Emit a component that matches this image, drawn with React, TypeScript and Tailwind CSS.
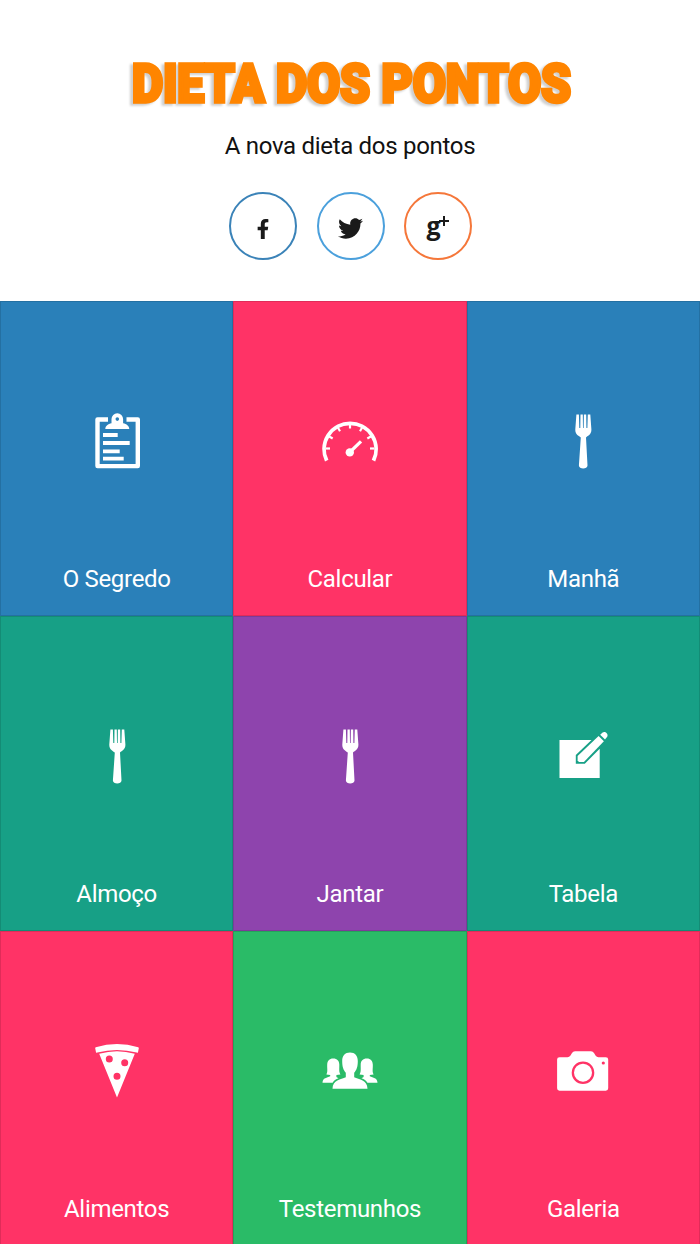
import clsx from "clsx"
import { FaFacebookF, FaTwitter } from "react-icons/fa"

const ClipboardIcon = () => (
  <svg viewBox="0 0 64 64" className="size-16" fill="none" stroke="currentColor">
    <path
      d="M23 10.5H12.5V57.1H52.8V10.5H41.5"
      strokeWidth="4.4"
      strokeLinejoin="round"
    />
    <path
      d="M18 26H32.7M18 34H44.7M18 42.3H34.7M18 49.7H38.7"
      strokeWidth="3.8"
    />
    <path
      d="M20.3 20C20.5 16.5 23 15 26.5 14.2V10A5.8 5.8 0 0 1 38.1 10V14.2C41.6 15 44.1 16.5 44.3 20ZM32.3 8.3A1.8 1.8 0 1 0 32.3 11.9A1.8 1.8 0 1 0 32.3 8.3Z"
      fill="currentColor"
      fillRule="evenodd"
      stroke="none"
    />
  </svg>
)

const GaugeIcon = () => (
  <svg viewBox="0 0 64 64" className="size-16" fill="none" stroke="currentColor">
    <path d="M8.7 51.7A26 26 0 1 1 55.5 51.7" strokeWidth="3.8" />
    {[-90, -60, -30, 0, 30, 60, 90].map((angle) => (
      <path
        key={angle}
        d="M32 15V19.5"
        strokeWidth="2.2"
        transform={`rotate(${angle} 32 39.5)`}
      />
    ))}
    <path d="M31 44L43 32.4" strokeWidth="3.2" />
    <circle cx="31.8" cy="43.4" r="4.2" fill="currentColor" stroke="none" />
  </svg>
)

const ForkIcon = () => (
  <svg viewBox="0 0 64 64" className="size-16" fill="currentColor">
    <path d="M25.4 5.4H27.9L28.3 19H29.3L29.5 5.4H31.8L32 19H32.7L32.9 5.4H35.2L35.4 19H36.4L36.8 5.4H39.3L40.4 20.5C40.5 25.5 37 26.5 35 28.5L36.5 56.5C36.5 60.4 27.9 60.4 27.9 56.5L29.8 28.5C27.5 26.5 24.1 25.5 24.3 20.5Z" />
  </svg>
)

const EditIcon = () => (
  <svg viewBox="0 0 64 64" className="size-16" fill="currentColor">
    <path d="M8.5 16H40.5L24.8 31V39.8H33.8L48.7 24.8V54H8.5Z" />
    <path d="M26.6 32.1L47.6 12L52.9 17.2L32.9 38.1H28L26.6 36.6Z" />
    <path d="M49.2 10.8L51.6 8.6C54.2 6.6 58 10.3 56 13L54 15.4Z" />
  </svg>
)

const PizzaIcon = () => (
  <svg viewBox="0 0 64 64" className="size-16" fill="currentColor">
    <path d="M10.8 8.2Q32 1.8 53.2 8.2Q54 8.5 53.8 9.2L53 13.2Q52.7 14 51.7 13.6Q32 8.3 12.3 13.6Q11.3 14 11 13.2L10.2 9.2Q10 8.5 10.8 8.2Z" />
    <path
      fillRule="evenodd"
      d="M14.2 14.8Q32 9.8 49.8 14.8L32 58.5ZM24.3 16.6A3.5 3.5 0 1 0 24.3 23.6A3.5 3.5 0 1 0 24.3 16.6ZM39.7 20.2A3.5 3.5 0 1 0 39.7 27.2A3.5 3.5 0 1 0 39.7 20.2ZM32 33.8A3.5 3.5 0 1 0 32 40.8A3.5 3.5 0 1 0 32 33.8Z"
    />
  </svg>
)

const UsersIcon = () => (
  <svg viewBox="0 0 64 64" className="size-16" fill="currentColor">
    <path d="M32 13.6C37 13.6 39.8 17 39.8 22C39.8 28 38.5 31 36.2 33.8V38.3C41 40.8 49.3 40.5 49.5 49.8H14.5C14.7 40.5 23 40.8 27.8 38.3V33.8C25.5 31 24.2 28 24.2 22C24.2 17 27 13.6 32 13.6Z" />
    <path d="M15.2 19.6C19.2 19.6 21.2 22 21.3 25.5C21.4 30 20.7 32.5 22.4 35.4L18.4 36V38L20.5 39.3C17.8 40.2 15.8 41.5 14.6 43.8H4.5C4.7 38.5 9 39 12.2 37.3V36L8.4 35.4C10 32.5 9 30 9.2 25.5C9.4 22 11.2 19.6 15.2 19.6Z" />
    <path d="M48.8 19.6C44.8 19.6 42.8 22 42.7 25.5C42.6 30 43.3 32.5 41.6 35.4L45.6 36V38L43.5 39.3C46.2 40.2 48.2 41.5 49.4 43.8H59.5C59.3 38.5 55 39 51.8 37.3V36L55.6 35.4C54 32.5 55 30 54.8 25.5C54.6 22 52.8 19.6 48.8 19.6Z" />
  </svg>
)

const CameraIcon = () => (
  <svg viewBox="0 0 64 64" className="size-16" fill="currentColor">
    <path
      fillRule="evenodd"
      d="M8.5 18.2H16.5Q18.3 18.2 19.5 16.5L21 14Q22 12.3 24 12.3H40Q42 12.3 43 14L44.5 16.5Q45.7 18.2 47.5 18.2H54.8Q57.2 18.2 57.2 20.6V49.3Q57.2 51.7 54.8 51.7H8.5Q6.1 51.7 6.1 49.3V20.6Q6.1 18.2 8.5 18.2ZM32 22.4A11.3 11.3 0 1 0 32 45A11.3 11.3 0 1 0 32 22.4ZM32 24.7A9 9 0 1 1 32 42.7A9 9 0 1 1 32 24.7ZM52.3 22.4A1.6 1.6 0 1 0 52.3 25.6A1.6 1.6 0 1 0 52.3 22.4Z"
    />
  </svg>
)

const tiles = [
  { label: "O Segredo", color: "bg-[#2a80b9]", icon: ClipboardIcon },
  { label: "Calcular", color: "bg-[#ff3366]", icon: GaugeIcon },
  { label: "Manhã", color: "bg-[#2a80b9]", icon: ForkIcon },
  { label: "Almoço", color: "bg-[#17a086]", icon: ForkIcon },
  { label: "Jantar", color: "bg-[#8e44ad]", icon: ForkIcon },
  { label: "Tabela", color: "bg-[#17a086]", icon: EditIcon },
  { label: "Alimentos", color: "bg-[#ff3366]", icon: PizzaIcon },
  { label: "Testemunhos", color: "bg-[#2abb67]", icon: UsersIcon },
  { label: "Galeria", color: "bg-[#ff3366]", icon: CameraIcon },
]

const Logo = () => (
  <h1>
    <svg
      viewBox="0 0 450 60"
      className="h-[60px] w-[450px] overflow-visible font-['Roboto',sans-serif] text-[54px] font-black drop-shadow-[-3px_2px_1px_#cfcfcf]"
    >
      <text
        x="7"
        y="51.5"
        textLength="439"
        lengthAdjust="spacingAndGlyphs"
        fill="#ff8500"
        stroke="#ff8500"
        strokeWidth="3.6"
      >
        DIETA DOS PONTOS
      </text>
    </svg>
  </h1>
)

const socialClass =
  "flex size-[68px] items-center justify-center rounded-full border-2 pt-[5px] text-[#1a1a1a]"

const App = () => {
  return (
    <div className="h-[1244px] w-[700px] overflow-hidden bg-white font-['Roboto',sans-serif] text-2xl tracking-[-0.3px]">
      <header className="flex h-[301px] flex-col items-center pt-[50px]">
        <Logo />
        <p className="mt-5 leading-8 text-[#111]">A nova dieta dos pontos</p>
        <div className="mt-[30px] ml-px flex gap-[19.5px]">
          <a className={clsx(socialClass, "border-[#3b83b8]")}>
            <FaFacebookF className="h-[20px] w-[14px]" />
          </a>
          <a className={clsx(socialClass, "border-[#4ba0dc]")}>
            <FaTwitter className="size-[25px]" />
          </a>
          <a className={clsx(socialClass, "border-[#f5773a]")}>
            <span className="mb-2 flex items-start font-['Open_Sans',sans-serif] text-[25px] leading-6 font-bold">
              g
              <svg viewBox="0 0 10 10" className="mt-[3px] -ml-px size-[10px]">
                <path d="M5 0V10M0 5H10" stroke="currentColor" strokeWidth="2" />
              </svg>
            </span>
          </a>
        </div>
      </header>

      <main className="grid auto-rows-[315px] grid-cols-3">
        {tiles.map(({ label, color, icon: Icon }) => (
          <a
            key={label}
            className={clsx(
              "flex flex-col items-center border border-black/12 pt-[107px] text-white",
              color,
            )}
          >
            <Icon />
            <span className="mt-[90px] leading-8">{label}</span>
          </a>
        ))}
      </main>
    </div>
  )
}

export default App
